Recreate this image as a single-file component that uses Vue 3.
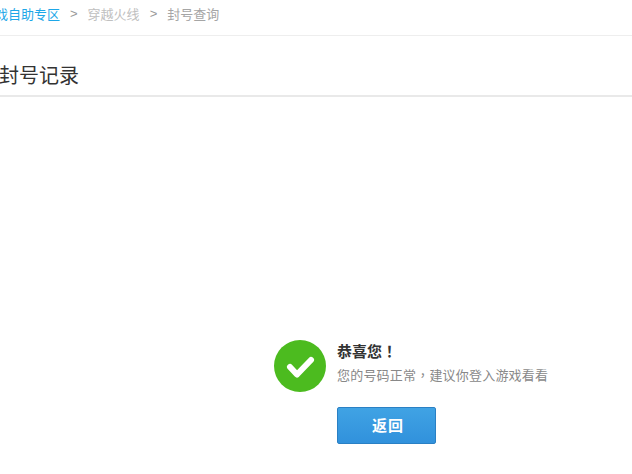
<script setup>
const crumbs = [
  { text: "游戏自助专区", cls: "link" },
  { text: "穿越火线", cls: "mid" },
  { text: "封号查询", cls: "last" },
];
</script>

<template>
  <div class="page">
    <div class="breadcrumb">
      <template v-for="(c, i) in crumbs" :key="c.text">
        <span v-if="i > 0" class="sep">&gt;</span>
        <span :class="c.cls">{{ c.text }}</span>
      </template>
    </div>
    <h2 class="title">封号记录</h2>
    <div class="result">
      <div class="message">
        <svg class="icon" width="52" height="52" viewBox="0 0 52 52">
          <circle cx="26" cy="26" r="26" fill="#4cbb1f" />
          <path d="M16 27 L23 34.500 L37 20" fill="none" stroke="#fff" stroke-width="6" stroke-linecap="round" stroke-linejoin="round" />
        </svg>
        <div class="copy">
          <div class="heading">恭喜您<span class="punct">！</span></div>
          <div class="desc">您的号码正常<span class="punct">，</span>建议你登入游戏看看</div>
        </div>
      </div>
      <button class="back">返回</button>
    </div>
  </div>
</template>

<style>
html, body {
  margin: 0;
  background: #fff;
  overflow: hidden;
}
</style>

<style scoped>
.page {
  width: 632px;
  height: 474px;
  overflow: hidden;
  font-family: "Liberation Sans", "Noto Sans CJK SC", sans-serif;
}

.breadcrumb {
  display: flex;
  align-items: center;
  box-sizing: border-box;
  width: 650px;
  height: 36px;
  margin-left: -18px;
  padding-bottom: 9px;
  border-bottom: 1px solid #eee;
  font-size: 13px;
}

.link {
  color: #1ea7e8;
}

.sep {
  margin: 0 10px;
  color: #999;
}

.mid {
  color: #c0c0c0;
}

.last {
  color: #a5a5a5;
}

.title {
  height: 59px;
  margin: 0 0 0 -1px;
  border-bottom: 2px solid #e9e9e9;
  font-size: 20px;
  font-weight: normal;
  line-height: 81px;
  color: #333;
}

.result {
  margin: 243px 0 0 274px;
}

.message {
  display: flex;
  gap: 11px;
}

.icon {
  display: block;
  flex: none;
}

.copy {
  padding-top: 1px;
}

.heading {
  font-size: 15px;
  line-height: 20px;
  font-weight: bold;
  color: #333;
}

.desc {
  margin-top: 3px;
  font-size: 13px;
  letter-spacing: 0.2px;
  line-height: 20px;
  color: #888;
}

.punct {
  font-family: "Noto Sans CJK TC", sans-serif;
}

.back {
  display: block;
  width: 99px;
  height: 37px;
  margin: 15px 0 0 63px;
  padding: 0 0 2px 3px;
  border: 1px solid #2a80c4;
  border-radius: 2px;
  background: linear-gradient(#40a3e4, #3191dc);
  color: #fff;
  font-family: inherit;
  font-size: 15px;
  font-weight: bold;
  letter-spacing: 1px;
}
</style>
